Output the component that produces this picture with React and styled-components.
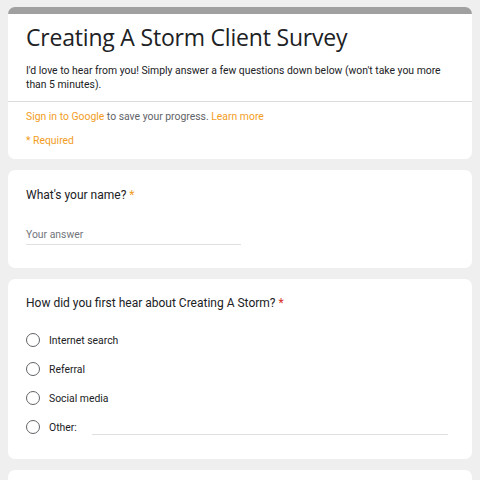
import React from 'react';
import styled, { createGlobalStyle } from 'styled-components';

const GlobalStyle = createGlobalStyle`
  html, body {
    margin: 0;
    padding: 0;
    background: #efefef;
    font-family: Roboto, "Liberation Sans", Arial, sans-serif;
    color: #202124;
  }
`;

const Page = styled.div`
  display: flex;
  flex-direction: column;
  gap: 11px;
  padding: 7px 8px 0;
  height: 480px;
  overflow: hidden;
  box-sizing: border-box;
`;

const Card = styled.div`
  background: #fff;
  border-radius: 7px;
  overflow: hidden;
  flex-shrink: 0;
  border-top: ${p => (p.header ? '7px solid #a0a0a0' : 'none')};
  min-height: ${p => p.minHeight || 0}px;
`;

const Section = styled.div`
  padding: ${p => p.pad || '0 18px'};
  border-bottom: ${p => (p.divided ? '1px solid #dadce0' : 'none')};
`;

const Title = styled.h1`
  margin: 0;
  font-family: "Open Sans", Roboto, sans-serif;
  font-weight: 400;
  font-size: 23px;
  line-height: 30px;
  letter-spacing: -0.2px;
  color: #202124;
`;

const Desc = styled.p`
  margin: 12px 0 0;
  font-size: 10.4px;
  line-height: 14px;
  color: #202124;
`;

const Small = styled.div`
  font-size: 10.4px;
  line-height: 14px;
  color: ${p => (p.accent ? '#f29d1e' : '#5f6368')};
  margin-top: ${p => p.mt || 0}px;
`;

const Link = styled.span`
  color: #f29d1e;
`;

const Question = styled.div`
  font-size: 12px;
  line-height: 18px;
  color: #202124;
`;

const Star = styled.span`
  color: ${p => p.color};
  margin-left: 3px;
`;

const AnswerLine = styled.div`
  margin-top: 24px;
  width: 215px;
  font-size: 10.4px;
  line-height: 14px;
  color: #70757a;
  padding-bottom: 2px;
  border-bottom: 1px solid #e0e0e0;
`;

const Options = styled.div`
  display: flex;
  flex-direction: column;
  gap: 13px;
  margin-top: 20px;
`;

const Option = styled.label`
  display: flex;
  align-items: center;
  height: 16px;
  font-size: 10.4px;
  color: #202124;
`;

const Radio = styled.span`
  box-sizing: border-box;
  width: 14px;
  height: 14px;
  border: 1.6px solid #5f6368;
  border-radius: 50%;
  flex-shrink: 0;
  margin-right: 9px;
`;

const OtherInput = styled.span`
  flex: 1;
  margin: 0 6px 0 15px;
  align-self: flex-end;
  border-bottom: 1px solid #e0e0e0;
  height: 14px;
`;

const options = ['Internet search', 'Referral', 'Social media'];

export default function App() {
  return (
    <>
      <GlobalStyle />
      <Page>
        <Card header>
          <Section pad="8px 18px 9px" divided>
            <Title>Creating A Storm Client Survey</Title>
            <Desc>
              I'd love to hear from you! Simply answer a few questions down below (won't take you more
              than 5 minutes).
            </Desc>
          </Section>
          <Section pad="8px 18px 11px">
            <Small>
              <Link>Sign in to Google</Link> to save your progress. <Link>Learn more</Link>
            </Small>
            <Small accent mt={10}>* Required</Small>
          </Section>
        </Card>

        <Card>
          <Section pad="16px 18px 23px">
            <Question>
              What's your name?<Star color="#f29d1e">*</Star>
            </Question>
            <AnswerLine>Your answer</AnswerLine>
          </Section>
        </Card>

        <Card>
          <Section pad="15px 18px 24px">
            <Question>
              How did you first hear about Creating A Storm?<Star color="#d93025">*</Star>
            </Question>
            <Options>
              {options.map(o => (
                <Option key={o}>
                  <Radio />
                  {o}
                </Option>
              ))}
              <Option>
                <Radio />
                Other:
                <OtherInput />
              </Option>
            </Options>
          </Section>
        </Card>

        <Card minHeight={40} />
      </Page>
    </>
  );
}
